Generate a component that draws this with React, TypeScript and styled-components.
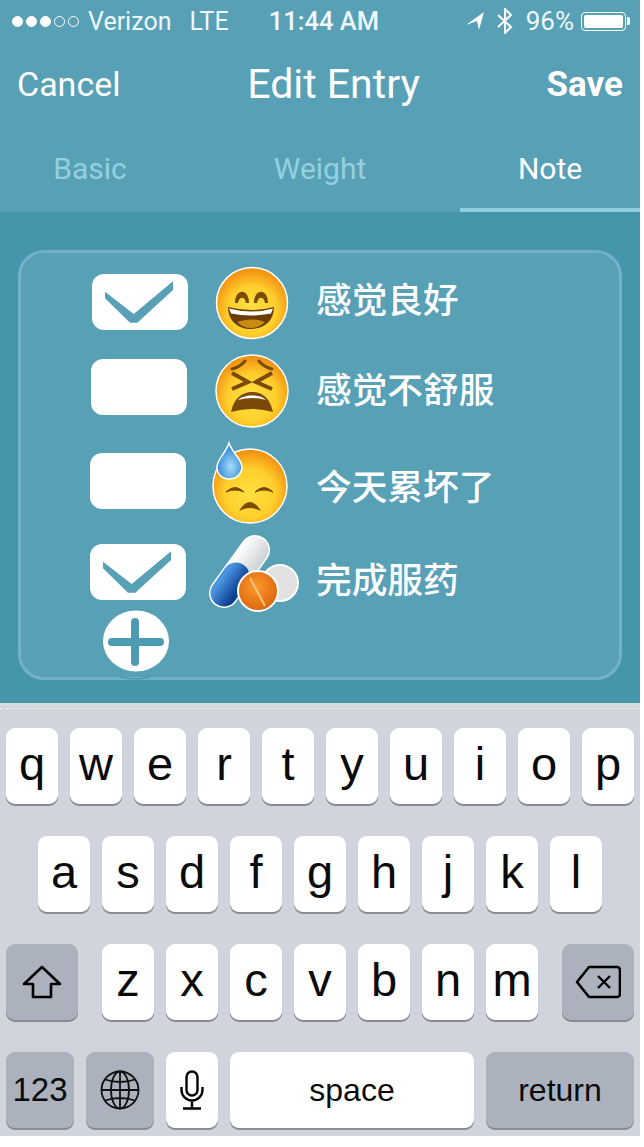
import React from "react";
import styled, { createGlobalStyle } from "styled-components";

const GlobalStyle = createGlobalStyle`
  html, body {
    margin: 0;
    padding: 0;
    background: #fff;
  }
  body {
    font-family: Roboto, "Liberation Sans", "Noto Sans CJK SC", sans-serif;
  }
`;

// PAGE
const Screen = styled.div`
  width: 640px;
  height: 1136px;
  display: flex;
  flex-direction: column;
  overflow: hidden;
`;

const Top = styled.div`
  height: 212px;
  background: #57a0b6;
  color: #fff;
  display: flex;
  flex-direction: column;
`;

// STATUS BAR
const StatusBar = styled.div`
  height: 42px;
  padding: 0 11px 0 12px;
  display: flex;
  align-items: center;
  font-size: 25px;
  color: #eef8fb;
`;

const Dots = styled.div`
  display: flex;
  gap: 3px;
  margin-right: 9px;
`;

const Dot = styled.span<{ $on?: boolean }>`
  width: 11px;
  height: 11px;
  border-radius: 50%;
  box-sizing: border-box;
  border: 1.5px solid #fff;
  background: ${(p) => (p.$on ? "#fff" : "transparent")};
`;

const Carrier = styled.span`
  margin-right: 18px;
`;

const Clock = styled.span`
  margin-left: 40px;
  font-weight: 500;
  font-size: 25.5px;
`;

const StatusRight = styled.div`
  margin-left: auto;
  display: flex;
  align-items: center;
`;

const Percent = styled.span`
  margin: 0 7px 0 12px;
  font-size: 26px;
`;

const Battery = styled.div`
  width: 45px;
  height: 19px;
  box-sizing: border-box;
  border: 1.5px solid #fff;
  border-radius: 4px;
  padding: 2px;
  position: relative;
  margin-right: 3px;
  &::before {
    content: "";
    display: block;
    height: 100%;
    background: #fff;
    border-radius: 2px;
  }
  &::after {
    content: "";
    position: absolute;
    right: -5px;
    top: 4px;
    width: 3px;
    height: 8px;
    background: #fff;
    border-radius: 0 2px 2px 0;
  }
`;

// NAV
const Nav = styled.div`
  height: 84px;
  padding: 0 17px;
  display: flex;
  justify-content: space-between;
  align-items: center;
`;

const NavAction = styled.span<{ $bold?: boolean }>`
  font-size: ${(p) => (p.$bold ? 35 : 34)}px;
  font-weight: ${(p) => (p.$bold ? 700 : 400)};
`;

const NavTitle = styled.span`
  font-size: 41px;
`;

// TABS
const Tabs = styled.div`
  flex: 1;
  display: flex;
  justify-content: space-between;
`;

const Tab = styled.div<{ $active?: boolean }>`
  width: 180px;
  box-sizing: border-box;
  text-align: center;
  font-size: 30px;
  padding-top: 25px;
  color: ${(p) => (p.$active ? "#fff" : "#94d0e0")};
  border-bottom: 4px solid ${(p) => (p.$active ? "#8fcfe2" : "transparent")};
`;

// NOTE PANEL
const Content = styled.div`
  height: 491px;
  background: #4595ab;
  box-sizing: border-box;
  padding: 38px 18px 0;
`;

const Card = styled.div`
  height: 430px;
  box-sizing: border-box;
  background: #57a0b6;
  border: 3px solid #72b1c8;
  border-radius: 26px;
  padding: 11px 0 0 68px;
`;

const Row = styled.div<{ $height: number }>`
  height: ${(p) => p.$height}px;
  display: grid;
  grid-template-columns: 114px 113px 1fr;
  align-items: start;
`;

const CheckBox = styled.div<{ $top: number; $left: number }>`
  width: 96px;
  height: 56px;
  margin: ${(p) => p.$top}px 0 0 ${(p) => p.$left}px;
  background: #fff;
  border-radius: 12px;
  svg {
    display: block;
  }
`;

const Emoji = styled.svg<{ $top: number; $left: number }>`
  display: block;
  overflow: visible;
  margin: ${(p) => p.$top}px 0 0 ${(p) => p.$left}px;
`;

const Label = styled.div<{ $top: number }>`
  margin-top: ${(p) => p.$top}px;
  font-family: "Noto Sans CJK SC", sans-serif;
  font-size: 35.7px;
  line-height: 44px;
  font-weight: 500;
  color: #fff;
  white-space: nowrap;
`;

const AddButton = styled.svg`
  display: block;
  overflow: visible;
  margin-left: 14px;
`;

// KEYBOARD
const Keyboard = styled.div`
  flex: 1;
  background: #d1d5db;
  border-top: 3px solid #d7dcdc;
  position: relative;
  box-sizing: border-box;
  padding: 22px 6px 0;
  display: flex;
  flex-direction: column;
  gap: 32px;
  font-family: "Liberation Sans", Arial, sans-serif;
  &::before {
    content: "";
    position: absolute;
    left: 0;
    right: 0;
    top: 2px;
    border-top: 1px dotted #fff;
  }
`;

const KeyRow = styled.div<{ $inset?: boolean }>`
  display: flex;
  gap: 12px;
  justify-content: ${(p) => (p.$inset ? "center" : "flex-start")};
`;

const Key = styled.div<{ $w?: number; $dark?: boolean; $size?: number; $after?: number }>`
  width: ${(p) => p.$w ?? 52}px;
  height: 76px;
  margin-right: ${(p) => p.$after ?? 0}px;
  padding-bottom: ${(p) => (p.$size ? 0 : 5)}px;
  box-sizing: border-box;
  border-radius: 9px;
  background: ${(p) => (p.$dark ? "#abb2bd" : "#fff")};
  box-shadow: 0 2px 0 #8a8b8f;
  color: #0a0a0a;
  font-size: ${(p) => p.$size ?? 47}px;
  display: flex;
  align-items: center;
  justify-content: center;
`;

const smile = (
  <Emoji $top={3} $left={13} width={72} height={72} viewBox="0 0 72 72">
    <circle cx="36" cy="36" r="35.5" fill="url(#face)" stroke="#fff" strokeWidth="1.5" />
    <path d="M19 36c0-15 14-15 14 0h-3c-1-7-7-7-8 0zM38 36c0-15 14-15 14 0h-3c-1-7-7-7-8 0z" fill="#7a4a08" />
    <path d="M12 40q24 6 46 0c0 14-10 22-23 22S12 54 12 40z" fill="#6a3d07" />
    <path d="M21 55q14-5 28 0q-6 6-14 6t-14-6z" fill="#c98a12" />
    <path d="M13 41.500q23 6 44 0l-2 5q-20 4-40 0z" fill="#fff" />
  </Emoji>
);

const tired = (
  <Emoji $top={-1} $left={13} width={72} height={74} viewBox="0 0 72 74">
    <circle cx="36" cy="37" r="36" fill="url(#face)" stroke="#fff" strokeWidth="1.5" />
    <path d="M16 15q8-2 13-8M56 15q-8-2-13-8" fill="none" stroke="#7a4a08" strokeWidth="3" strokeLinecap="round" />
    <path d="M16 19l16 9-16 7M56 19l-16 9 16 7" fill="none" stroke="#7a4a08" strokeWidth="4" />
    <path d="M15 58c3-14 11-20 21-20s18 6 21 20q-21-6-42 0z" fill="#7a4a08" />
    <path d="M22 46c6-6 22-6 28 0q-14-4-28 0z" fill="#fff" />
  </Emoji>
);

const sweat = (
  <Emoji $top={0} $left={8} width={78} height={80} viewBox="0 0 78 80">
    <circle cx="39" cy="41" r="37" fill="url(#face)" stroke="#fff" strokeWidth="1.5" />
    <path d="M15 47q9-9 18 0q-9-4-18 0zM44 47q9-9 18 0q-9-4-18 0z" fill="#7a4a08" stroke="#7a4a08" strokeWidth="1" />
    <path d="M28 66q11-18 22 0q-11-6-22 0z" fill="#7a4a08" />
    <path d="M18-2C15 8 6 14 6 22c0 7 5 12 12 12s13-5 13-12C31 14 21 8 18-2z" fill="url(#drop)" stroke="#fff" strokeWidth="1.5" />
  </Emoji>
);

const pills = (
  <Emoji $top={1} $left={6} width={89} height={78} viewBox="0 0 89 78">
    <circle cx="71" cy="47" r="18" fill="#e2e2e2" stroke="#fff" strokeWidth="2" />
    <line x1="46" y1="14" x2="15" y2="57" stroke="#fff" strokeWidth="30" strokeLinecap="round" />
    <line x1="46" y1="14" x2="31" y2="35" stroke="url(#cap)" strokeWidth="27" strokeLinecap="round" />
    <line x1="27" y1="40" x2="15" y2="57" stroke="url(#blue)" strokeWidth="27" strokeLinecap="round" />
    <circle cx="49" cy="55" r="20" fill="url(#orange)" stroke="#fff" strokeWidth="2" />
    <line x1="41" y1="42" x2="56" y2="70" stroke="#f9c27a" strokeWidth="2" />
  </Emoji>
);

const rows = [
  { label: "感觉良好", checked: true, h: 91, checkTop: 10, checkLeft: 3, labelTop: 12, emoji: smile },
  { label: "感觉不舒服", checked: false, h: 90, checkTop: 4, checkLeft: 2, labelTop: 11, emoji: tired },
  { label: "今天累坏了", checked: false, h: 90, checkTop: 8, checkLeft: 1, labelTop: 18, emoji: sweat },
  { label: "完成服药", checked: true, h: 76, checkTop: 9, checkLeft: 1, labelTop: 21, emoji: pills },
];

const letters = ["qwertyuiop", "asdfghjkl", "zxcvbnm"];

export default function App() {
  return (
    <Screen>
      <GlobalStyle />
      <svg width="0" height="0" style={{ position: "absolute" }}>
        <defs>
          <radialGradient id="face" cx="50%" cy="60%" r="56%">
            <stop offset="0%" stopColor="#ffe03f" />
            <stop offset="60%" stopColor="#ffcf2c" />
            <stop offset="100%" stopColor="#f39313" />
          </radialGradient>
          <radialGradient id="drop" cx="55%" cy="65%" r="60%">
            <stop offset="0%" stopColor="#a5defc" />
            <stop offset="100%" stopColor="#2a7fd0" />
          </radialGradient>
          <linearGradient id="cap" x1="0" y1="0" x2="1" y2="1">
            <stop offset="0%" stopColor="#fdfdfd" />
            <stop offset="100%" stopColor="#cfd3d6" />
          </linearGradient>
          <linearGradient id="blue" x1="0" y1="0" x2="1" y2="1">
            <stop offset="0%" stopColor="#4a94e0" />
            <stop offset="100%" stopColor="#0d3f92" />
          </linearGradient>
          <radialGradient id="orange" cx="45%" cy="40%" r="65%">
            <stop offset="0%" stopColor="#fb9a2c" />
            <stop offset="100%" stopColor="#d9620c" />
          </radialGradient>
        </defs>
      </svg>
      <Top>
        <StatusBar>
          <Dots>
            <Dot $on />
            <Dot $on />
            <Dot $on />
            <Dot />
            <Dot />
          </Dots>
          <Carrier>Verizon</Carrier>
          <span>LTE</span>
          <Clock>11:44 AM</Clock>
          <StatusRight>
            <svg width="18" height="18" viewBox="0 0 18 18">
              <path d="M0 13L18 0l-5 18-2-9z" fill="#fff" />
            </svg>
            <svg width="18" height="26" viewBox="0 0 18 26" style={{ marginLeft: 12 }}>
              <path d="M2 7l13 12-6 6V1l6 6L2 19" fill="none" stroke="#fff" strokeWidth="2" />
            </svg>
            <Percent>96%</Percent>
            <Battery />
          </StatusRight>
        </StatusBar>
        <Nav>
          <NavAction>Cancel</NavAction>
          <NavTitle>Edit Entry</NavTitle>
          <NavAction $bold>Save</NavAction>
        </Nav>
        <Tabs>
          <Tab>Basic</Tab>
          <Tab>Weight</Tab>
          <Tab $active>Note</Tab>
        </Tabs>
      </Top>
      <Content>
        <Card>
          {rows.map((r) => (
            <Row key={r.label} $height={r.h}>
              <CheckBox $top={r.checkTop} $left={r.checkLeft}>
                {r.checked && (
                  <svg width="96" height="56" viewBox="0 0 96 56">
                    <path d="M13 17.7L41.7 40 81 7.3V16L45.300 48.700H38L13 24.300z" fill="#57a0b6" />
                  </svg>
                )}
              </CheckBox>
              {r.emoji}
              <Label $top={r.labelTop}>{r.label}</Label>
            </Row>
          ))}
          <AddButton width="66" height="68" viewBox="0 0 66 68">
            <ellipse cx="33" cy="30" rx="33" ry="30.500" fill="#fff" />
            <path d="M28 11a4 4 0 0 1 8 0v16h21a4 4 0 0 1 0 8H36v16a4 4 0 0 1-8 0V35H9a4 4 0 0 1 0-8h19z" fill="#4d9bb2" />
            <path d="M17 66q15 4 30 0" fill="none" stroke="#4d9bb2" strokeWidth="1.500" />
          </AddButton>
        </Card>
      </Content>
      <Keyboard>
        <KeyRow>
          {letters[0].split("").map((l) => (
            <Key key={l}>{l}</Key>
          ))}
        </KeyRow>
        <KeyRow $inset>
          {letters[1].split("").map((l) => (
            <Key key={l}>{l}</Key>
          ))}
        </KeyRow>
        <KeyRow>
          <Key $w={72} $dark $after={12} $size={46}>
            <svg width="40" height="34" viewBox="0 0 40 34">
              <path d="M20 2L2 19h9v13h18V19h9z" fill="none" stroke="#000" strokeWidth="2.600" strokeLinejoin="round" />
            </svg>
          </Key>
          {letters[2].split("").map((l) => (
            <Key key={l} $after={l === "m" ? 12 : 0}>{l}</Key>
          ))}
          <Key $w={72} $dark $size={46}>
            <svg width="46" height="34" viewBox="0 0 46 34">
              <path d="M14 2h28a3 3 0 0 1 3 3v24a3 3 0 0 1-3 3H14L2 17z" fill="none" stroke="#000" strokeWidth="2.600" strokeLinejoin="round" />
              <path d="M23 11l12 12M35 11L23 23" fill="none" stroke="#000" strokeWidth="2.400" />
            </svg>
          </Key>
        </KeyRow>
        <KeyRow>
          <Key $w={68} $dark $size={33}>123</Key>
          <Key $w={68} $dark $size={33}>
            <svg width="40" height="40" viewBox="0 0 40 40" fill="none" stroke="#111" strokeWidth="1.800">
              <circle cx="20" cy="20" r="18.500" />
              <ellipse cx="20" cy="20" rx="9" ry="18.500" />
              <path d="M20 1.500v37M1.500 20h37M5 9.500q15 5 30 0M5 30.500q15-5 30 0" />
            </svg>
          </Key>
          <Key $size={33}>
            <svg width="24" height="40" viewBox="0 0 24 40" fill="none" stroke="#000" strokeWidth="2.400">
              <rect x="6.500" y="1.500" width="11" height="24" rx="5.500" />
              <path d="M1.500 17v3a10.500 10.500 0 0 0 21 0v-3M12 31v7M3 38.500h18" />
            </svg>
          </Key>
          <Key $w={244} $size={32}>space</Key>
          <Key $w={148} $dark $size={32}>return</Key>
        </KeyRow>
      </Keyboard>
    </Screen>
  );
}
